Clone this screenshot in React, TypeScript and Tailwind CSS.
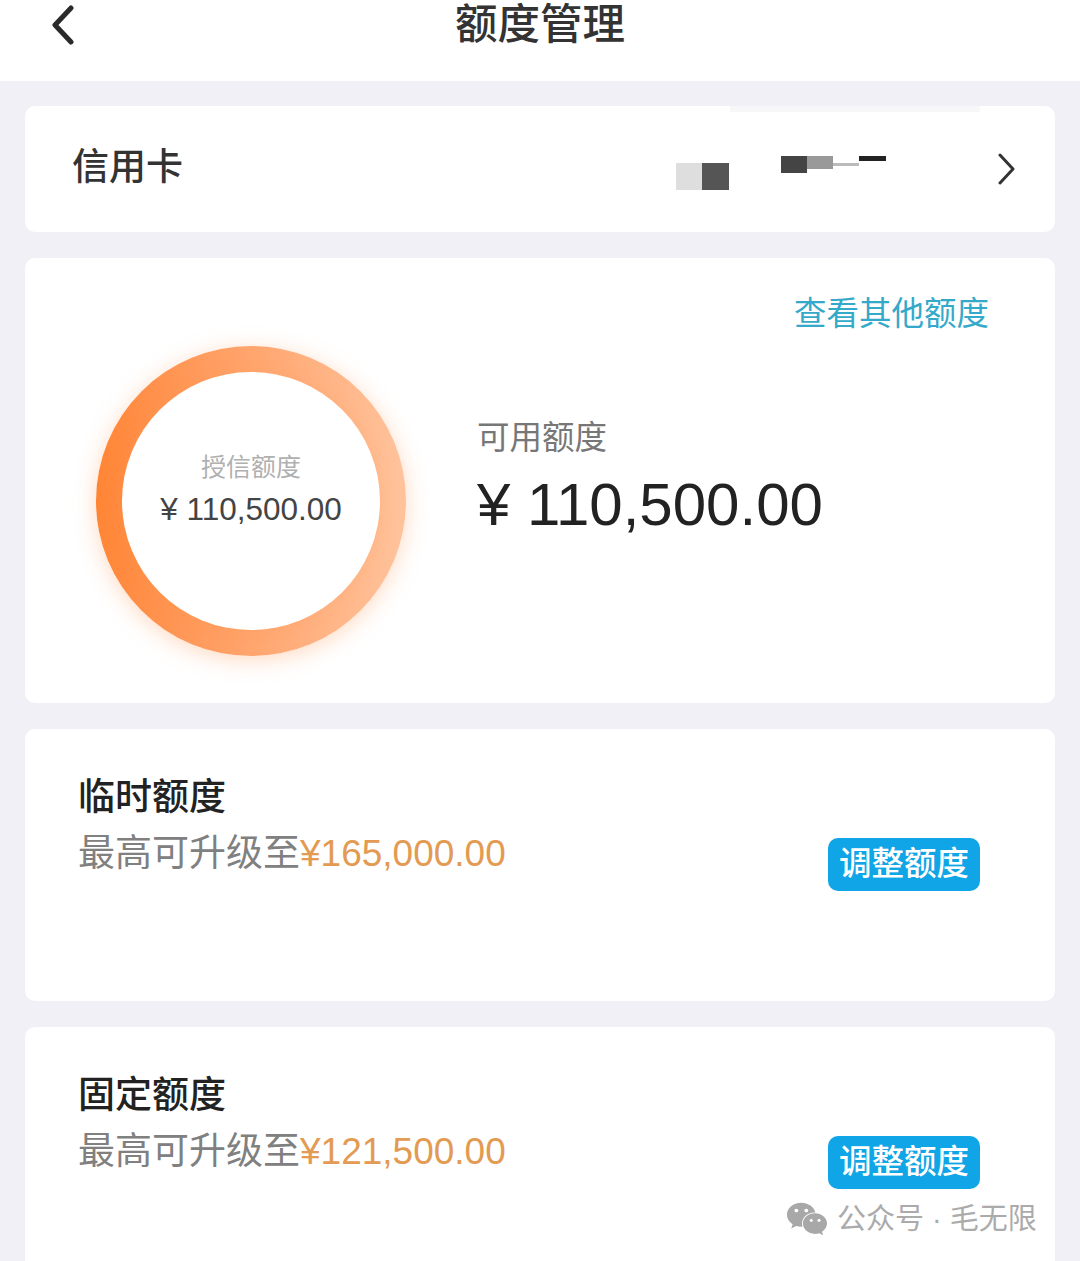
import React from 'react';
import { FaWeixin } from 'react-icons/fa';

const FONT = "font-['Liberation_Sans','Noto_Sans_CJK_SC',sans-serif]";

const LimitCard = ({ title, amount, amountClass }: { title: string; amount: string; amountClass?: string }) => (
  <div className="h-[272px] shrink-0 rounded-[10px] bg-white pl-[53px] pr-[75px] pt-[45px] flex items-start justify-between">
    <div>
      <div className="h-[48px] leading-[48px] text-[37px] font-medium text-[#222]">{title}</div>
      <div className="mt-[8px] h-[48px] leading-[48px] text-[37px] flex">
        <span className="text-[#808080]">最高可升级至</span>
        <span className={`text-[#e39a52] ${amountClass ?? ''}`}>{amount}</span>
      </div>
    </div>
    <button className="mt-[64px] w-[152px] h-[53px] rounded-[10px] bg-[#10a5e6] text-white text-[32.5px] leading-[53px] text-center font-medium">
      调整额度
    </button>
  </div>
);

export default function App() {
  return (
    <div className={`relative h-[1261px] overflow-hidden bg-[#f0f0f6] ${FONT}`}>
      {/* header */}
      <div className="h-[81px] bg-white flex items-start justify-between pl-[50px] pr-[50px]">
        <svg width="26" height="40" viewBox="0 0 26 40" className="mt-[5px]" fill="none">
          <path d="M21 3 L5 20 L21 37" stroke="#2a2a2a" strokeWidth="5" strokeLinecap="round" strokeLinejoin="round" />
        </svg>
        <div className="text-[42.5px] leading-[50px] font-medium text-[#333]">额度管理</div>
        <div className="w-[26px]" />
      </div>

      <div className="px-[25px] pt-[25px] flex flex-col gap-[26px]">
        {/* card select row */}
        <div className="relative h-[126px] shrink-0 rounded-[10px] bg-white pl-[47px] pr-[38px] flex items-center justify-between">
          <div className="absolute left-[705px] top-0 w-[250px] h-[6px] bg-[#f7f7fa]" />
          <div className="text-[37px] leading-[48px] font-medium text-[#333] -mt-[3px]">信用卡</div>
          <div className="flex items-center">
            <div className="flex mt-[14px]">
              <div className="w-[26px] h-[27px] bg-[#dedede]" />
              <div className="w-[27px] h-[27px] bg-[#555]" />
            </div>
            <div className="ml-[52px] flex items-start -mt-[10px] w-[105px]">
              <div className="w-[26px] h-[17px] bg-[#444]" />
              <div className="w-[26px] h-[13px] bg-[#999]" />
              <div className="w-[26px] h-[3px] mt-[7px] bg-[#bbb]" />
              <div className="w-[27px] h-[5px] bg-[#222]" />
            </div>
            <svg width="20" height="32" viewBox="0 0 20 32" className="ml-[111px]" fill="none">
              <path d="M3 2 L16 16 L3 30" stroke="#333" strokeWidth="3" strokeLinecap="round" strokeLinejoin="round" />
            </svg>
          </div>
        </div>

        {/* credit overview */}
        <div className="h-[445px] shrink-0 rounded-[10px] bg-white pt-[36px]">
          <div className="h-[40px] leading-[40px] text-right pr-[66px] text-[32.5px] text-[#35a9c9]">查看其他额度</div>
          <div className="mt-[12px] pl-[71px] flex items-start">
            <div className="w-[310px] h-[310px] shrink-0 rounded-full bg-gradient-to-r from-[#ff8534] to-[#ffc39c] shadow-[0_4px_22px_rgba(255,150,80,0.35)] flex items-center justify-center">
              <div className="w-[258px] h-[258px] rounded-full bg-white shadow-[0_0_14px_rgba(255,150,80,0.25)] flex flex-col items-center justify-center pb-[25px]">
                <div className="text-[25px] leading-[36px] text-[#b0b0b0]">授信额度</div>
                <div className="mt-[4px] text-[31.5px] leading-[40px] text-[#444]">¥ 110,500.00</div>
              </div>
            </div>
            <div className="ml-[71px] pt-[71px]">
              <div className="text-[32.5px] leading-[42px] text-[#777]">可用额度</div>
              <div className="mt-[10px] text-[60px] leading-[72px] font-medium text-[#222]">¥ 110,500.00</div>
            </div>
          </div>
        </div>

        <LimitCard title="临时额度" amount="¥165,000.00" />
        <LimitCard title="固定额度" amount="¥121,500.00" />
      </div>

      {/* watermark */}
      <div className="absolute left-[786px] top-[1198px] flex items-center gap-[9px] text-[29px] leading-[40px] text-[#ababab]">
        <FaWeixin className="w-[42px] h-[42px] text-[#a8a8a8]" />
        <span>公众号 · 毛无限</span>
      </div>
    </div>
  );
}
